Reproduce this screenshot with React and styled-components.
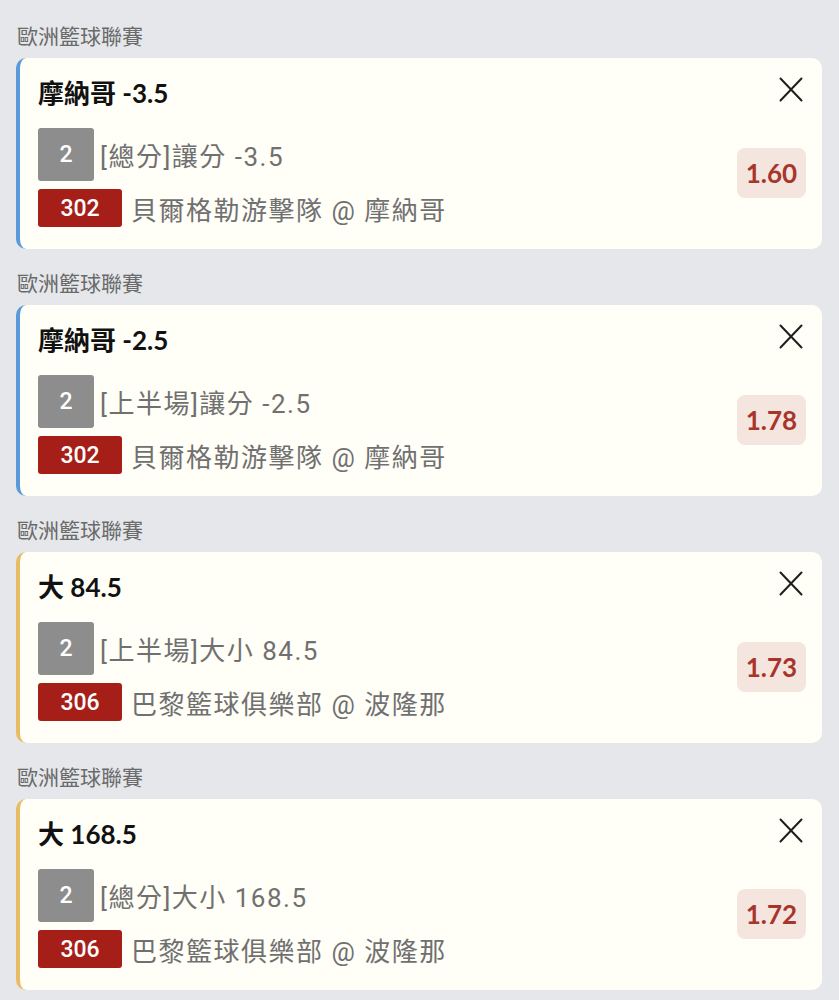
import React from 'react'
import styled, { createGlobalStyle } from 'styled-components'

const GlobalStyle = createGlobalStyle`
  html, body {
    margin: 0;
    padding: 0;
    background: #e5e7ea;
  }
  body {
    font-family: Lato, "Noto Sans CJK TC", sans-serif;
  }
`

const Page = styled.div`
  width: 839px;
  min-height: 1000px;
  padding-top: 2px;
  box-sizing: border-box;
  background: #e5e7ea;
`

const Group = styled.section`
  padding-top: 20px;
`

const League = styled.div`
  padding-left: 17px;
  margin-bottom: 10px;
  font-family: "Noto Sans CJK TC", sans-serif;
  font-size: 21px;
  line-height: 26px;
  color: #6a6a6a;
`

const Card = styled.div`
  margin: 0 17px 0 16px;
  min-height: 191px;
  box-sizing: border-box;
  background: #fffef7;
  border-left: 4px solid ${props => (props.accent === 'gold' ? '#e8bb66' : '#5b9ad9')};
  border-radius: 10px;
  padding: 20px 16px 22px 18px;
  display: grid;
  grid-template-columns: 1fr auto;
  grid-template-areas:
    'title close'
    'body odds';
`

const Title = styled.div`
  grid-area: title;
  font-family: Lato, "Noto Sans CJK TC", sans-serif;
  font-weight: 700;
  font-size: 26px;
  line-height: 30px;
  color: #111;
`

const Close = styled.button`
  grid-area: close;
  align-self: start;
  justify-self: end;
  margin: -1px 3px 0 0;
  padding: 0;
  border: 0;
  background: none;
  width: 24px;
  height: 25px;
  cursor: pointer;
  display: flex;
`

const Body = styled.div`
  grid-area: body;
  margin-top: 20px;
  display: flex;
  flex-direction: column;
  gap: 8px;
`

const Line = styled.div`
  display: flex;
  align-items: center;
  gap: ${props => (props.wide ? '9px' : '6px')};
  font-family: Roboto, "Noto Sans CJK TC", sans-serif;
  color: #707070;
  font-size: 26px;
  letter-spacing: 1.5px;
  white-space: nowrap;
`

const Tag = styled.span`
  display: inline-flex;
  align-items: center;
  justify-content: center;
  flex: none;
  width: ${props => (props.red ? '84px' : '56px')};
  height: ${props => (props.red ? '38px' : '53px')};
  border-radius: 3px;
  background: ${props => (props.red ? '#a51f18' : '#8d8d8d')};
  color: #fff;
  font-family: Roboto, sans-serif;
  font-size: 23px;
  font-weight: 500;
  letter-spacing: 0;
`

const Odds = styled.div`
  grid-area: odds;
  align-self: center;
  margin-top: 11px;
  width: 69px;
  height: 50px;
  border-radius: 8px;
  background: #f4e5df;
  color: #a8352c;
  font-family: Lato, sans-serif;
  font-weight: 700;
  font-size: 26px;
  display: flex;
  align-items: center;
  justify-content: center;
`

const XIcon = () => (
  <svg width="24" height="25" viewBox="0 0 24 25" fill="none" stroke="#1e1e1e" strokeWidth="2" strokeLinecap="round">
    <line x1="1.5" y1="1.5" x2="22.5" y2="23.5" />
    <line x1="22.5" y1="1.5" x2="1.5" y2="23.5" />
  </svg>
)

const bets = [
  { title: '摩納哥 -3.5', market: '[總分]讓分 -3.5', code: '302', match: '貝爾格勒游擊隊 @ 摩納哥', odds: '1.60', accent: 'blue' },
  { title: '摩納哥 -2.5', market: '[上半場]讓分 -2.5', code: '302', match: '貝爾格勒游擊隊 @ 摩納哥', odds: '1.78', accent: 'blue' },
  { title: '大 84.5', market: '[上半場]大小 84.5', code: '306', match: '巴黎籃球俱樂部 @ 波隆那', odds: '1.73', accent: 'gold' },
  { title: '大 168.5', market: '[總分]大小 168.5', code: '306', match: '巴黎籃球俱樂部 @ 波隆那', odds: '1.72', accent: 'gold' },
]

export default function App() {
  return (
    <Page>
      <GlobalStyle />
      {bets.map((b, i) => (
        <Group key={i}>
          <League>歐洲籃球聯賽</League>
          <Card accent={b.accent}>
            <Title>{b.title}</Title>
            <Close aria-label="remove">
              <XIcon />
            </Close>
            <Body>
              <Line>
                <Tag>2</Tag>
                <span>{b.market}</span>
              </Line>
              <Line wide>
                <Tag red>{b.code}</Tag>
                <span>{b.match}</span>
              </Line>
            </Body>
            <Odds>{b.odds}</Odds>
          </Card>
        </Group>
      ))}
    </Page>
  )
}
